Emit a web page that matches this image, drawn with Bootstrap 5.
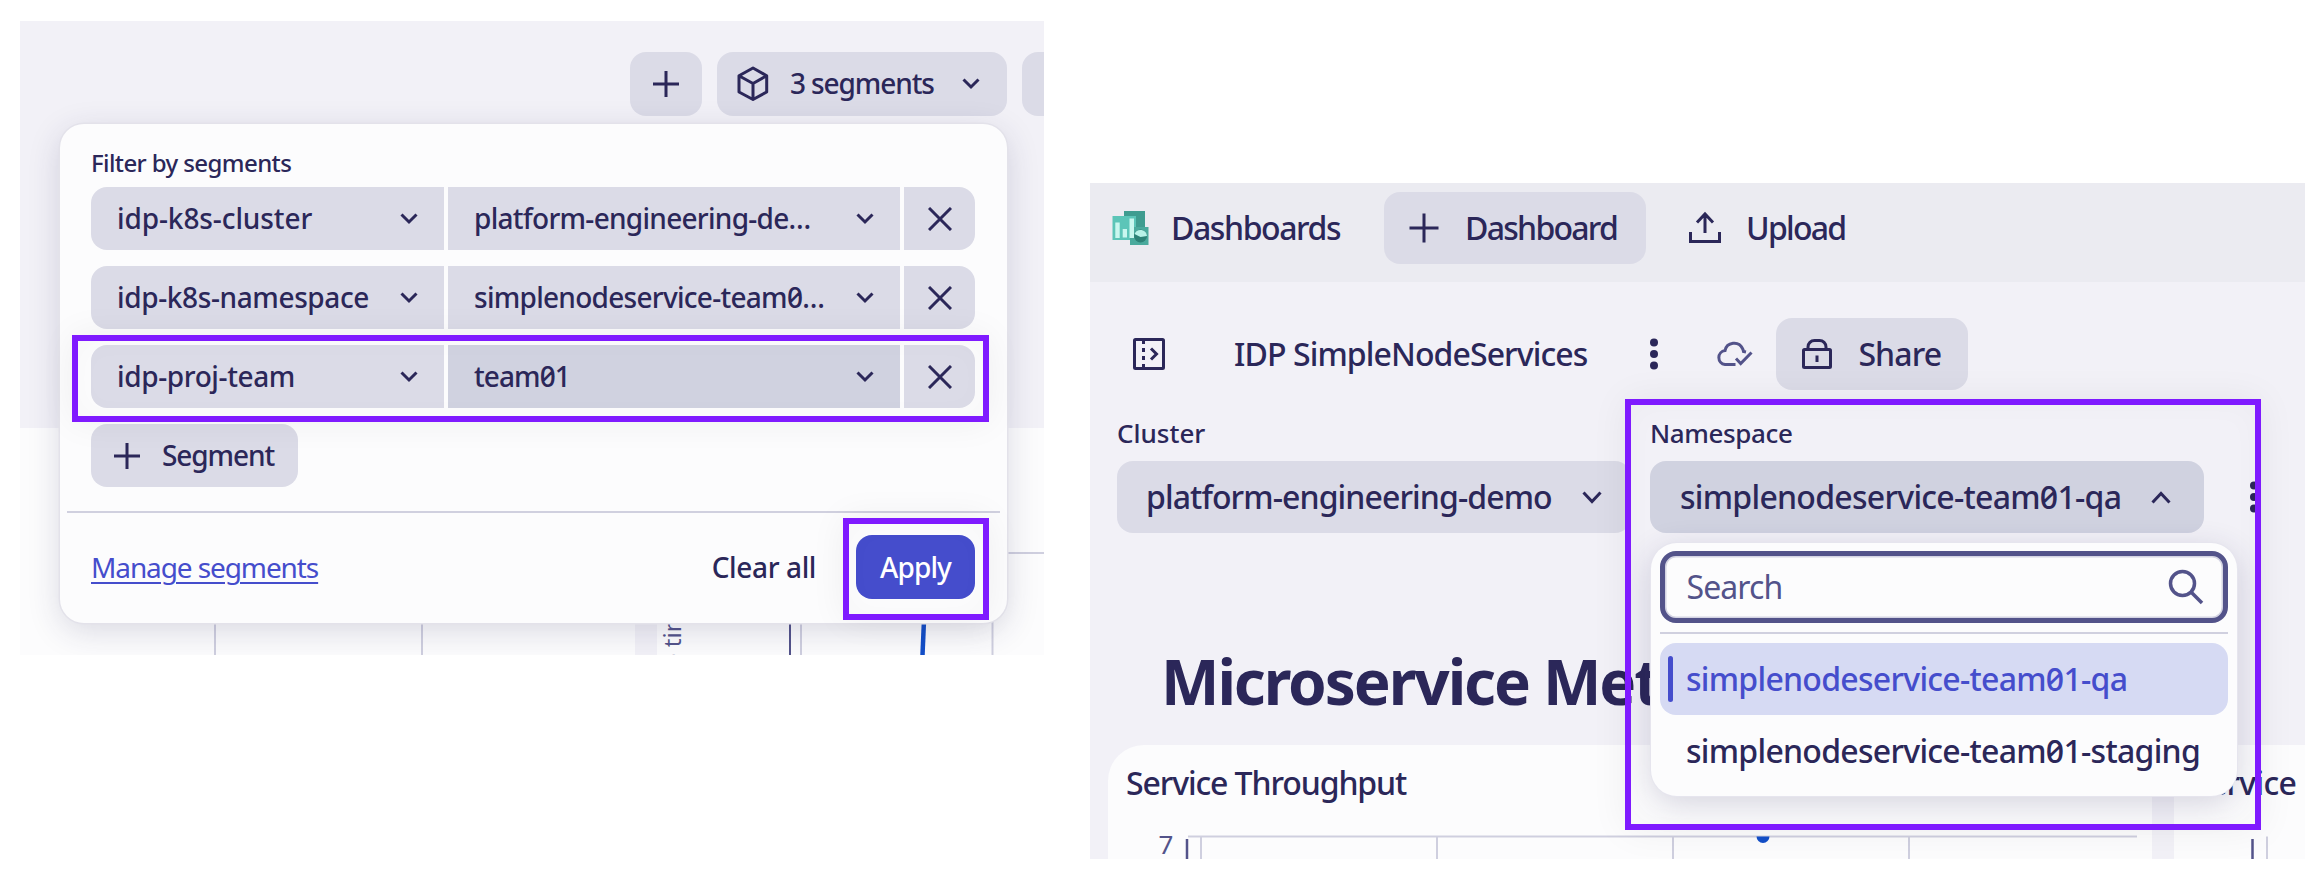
<!DOCTYPE html>
<html lang="en">
<head>
<meta charset="utf-8">
<title>Segments and dashboard variables</title>
<link rel="stylesheet" href="https://cdn.jsdelivr.net/npm/bootstrap@5.3.0/dist/css/bootstrap.min.css">
<style>
:root{--ink:#2b2759;--soft:#dbdbe7;--soft-on:#d0d2e0;--page:#f2f1f7;--surface:#fcfcfd;--line:#d0d0df;--brand:#454dcc;--mark:#7f1aff}
body{font-family:"Noto Sans",sans-serif;font-weight:500;color:var(--ink);background:#fff;height:892px;overflow:hidden;font-feature-settings:"zero" 1;line-height:1;white-space:nowrap}
svg{flex:none;display:block;fill:none;stroke:currentColor}
svg.solid{fill:currentColor;stroke:none}
.shot{background:var(--page);overflow:hidden}
.shot-a{width:1024px;height:634px;margin:21px 0 0 20px;font-size:28px}
.shot-b{width:1215px;height:676px;margin:183px 0 0 46px;font-size:32px}
.pill{background:var(--soft);border:0;border-radius:16px;color:inherit;font-weight:500;padding:0;display:flex;align-items:center;flex:none}
.pill-on{background:var(--soft-on)}
/* tracking steps */
.ls-0{letter-spacing:-.1px}.ls-1{letter-spacing:-.38px}.ls-2{letter-spacing:-.6px}.ls-3{letter-spacing:-.72px}.ls-4{letter-spacing:-.9px}
.ls-5{letter-spacing:-1.1px}.ls-6{letter-spacing:-1.42px}.ls-7{letter-spacing:-1.75px}
/* segments toolbar */
.bar-a{height:64px;margin-top:31px;padding-left:610px;gap:15px}
.bar-a .pill{height:64px}
.w-plus{width:72px}.w-segs{width:290px}.w-cut{width:60px}
.cube{margin:0 17px 0 16px}
.chev-segs{margin-left:28px}
/* segment popup */
.popup{left:40px;top:103px;width:946.5px;height:499px;border-radius:24px;background:var(--surface);box-shadow:0 0 0 1.5px #e3e2ea,0 8px 32px rgba(43,39,89,.17)}
.popup-in{padding:0 31px}
.fl-label{font-size:24px;line-height:32px;padding-top:23px;height:63px}
.seg-row{height:63px;gap:4px;margin-bottom:16px}
.seg-row .pill{height:63px;border-radius:0;padding:0 26px}
.seg-row .k{width:353px;border-radius:16px 0 0 16px}
.seg-row .v{width:452px}
.seg-row .x{width:71px;border-radius:0 16px 16px 0;padding:0;justify-content:center}
.seg-row span,.add-seg span,.foot-a>*,.bar-a span{position:relative;top:-1px}
.add-seg{width:207px;height:63px;padding-left:22px;gap:21px}
.rule-a{height:2px;background:var(--line);margin:24px 7px 0}
.foot-a{height:64px;margin-top:23px;padding:0 31.5px 0 31px}
.link-a{color:var(--brand);font-weight:400;text-decoration-thickness:2px;text-underline-offset:4px}
.clear{margin:0 40px 0 auto}
.apply{width:119px;height:64px;background:var(--brand);color:#fff;justify-content:center}
/* charts behind the popup */
.under-a{left:0;top:407px;width:1024px;height:227px;background:var(--surface)}
/* highlight frames */
.hl{border:6px solid var(--mark);box-shadow:0 0 36px rgba(0,0,0,.06),inset 0 0 30px rgba(0,0,0,.025);pointer-events:none}
.hl-row{left:52px;top:314px;width:917px;height:87px}
.hl-apply{left:823px;top:497px;width:146px;height:102px}
.hl-menu{left:535px;top:216px;width:636px;height:431px}
/* dashboards app */
.top-b{height:99px;background:#ebebf1;padding:9px 0 18px 22px}
.top-b .pill{width:262px;height:72px;margin-left:44px;padding-left:25px;gap:26px}
.app-name{margin-left:21px}
.up-icon{margin:0 24px 0 42px}
.title-b{height:72px;margin-top:36px}
.title-b .pill{width:192px;height:72px;padding-left:26px;gap:26px;margin-left:22px}
.panel-icon{margin:0 69px 0 43px}
.more{margin-left:62px}
.cloud{margin-left:57px;color:#53538a}
.vars{padding:25px 0 0 27px}
.var-1{width:533px}
.var-label{font-size:26px;line-height:36px;height:36px;margin-bottom:10px}
.sel-b{height:72px;padding-left:30px;gap:30px}
.sel-1{width:514px;padding-left:29px}.sel-2{width:554px}
.more-2{margin:66px 0 0 45px}
.menu-b{left:560.5px;top:360px;width:586px;height:253px;border-radius:26px;background:var(--surface);padding:8px 9px;box-shadow:0 0 0 1px #e6e5ee,0 8px 32px rgba(43,39,89,.19)}
.search-b{height:72px;border:5px solid #53538a;border-radius:16px;box-shadow:inset 0 0 0 1.5px #d4d4e3;color:#53538a;font-weight:400;padding:0 19px 0 22px}
.rule-b{height:2px;background:var(--line);margin:9px 0}
.opt{height:72px;border-radius:16px;padding-left:8px}
.opt i{width:5px;height:46px;border-radius:3px;margin-right:13.5px}
.opt-on{background:#d6daf3;color:var(--brand)}
.opt-on i{background:var(--brand)}
.head-b{font-size:62px;font-weight:700;line-height:72px;left:71px;top:462px;letter-spacing:-2.09px}
.tiles{left:18px;top:561.5px;width:1197px;height:115px;gap:22px}
.tile{background:var(--surface);border-radius:36px 36px 0 0;height:115px;position:relative}
.tile-1{width:1044px}
.tile-2{border-top-right-radius:0}
.tile-name{padding:16px 0 0 18px;line-height:44px}
.tile svg{left:0;top:0}
</style>
</head>
<body>
<div class="d-flex align-items-start">
  <section class="shot shot-a position-relative flex-shrink-0">
    <div class="under-a position-absolute">
      <svg width="1024" height="227" viewBox="20 428 1024 227">
        <path d="M635 428H657V655H635Z" fill="#f2f1f7" stroke="none"/>
        <path d="M215 553V655M422 553V655M801 553V655M992.500 553V655M790 553H1044" stroke="#cfcfdf" stroke-width="2"/>
        <path d="M790 553V655" stroke="#53538a" stroke-width="2"/>
        <path d="M924 620L922.500 655" stroke="#134fc9" stroke-width="4.500"/>
        <text transform="translate(681 667) rotate(-90)" font-size="24" font-weight="400" fill="#53538a" stroke="none">e time</text>
      </svg>
    </div>
    <div class="bar-a d-flex">
      <button class="pill w-plus justify-content-center"><svg width="28" height="28" stroke-width="3"><path d="M14 1V27M1 14H27"/></svg></button>
      <button class="pill w-segs"><svg class="cube" width="40" height="40" stroke-width="3" stroke-linejoin="round"><path d="M20 4L33.700 11.700V28L20 35.500L6 28V11.700ZM6 11.700L20 19.500L33.700 11.700M20 19.500V35.500"/></svg><span class="ls-5">3 segments</span><svg class="chev-segs" width="18" height="12" stroke-width="3"><path d="M1.500 1.500L9 9L16.500 1.500"/></svg></button>
      <div class="pill w-cut"></div>
    </div>
    <div class="popup position-absolute">
      <div class="popup-in">
        <div class="fl-label"><span class="ls-2">Filter by segments</span></div>
        <div class="seg-row d-flex"><div class="pill k justify-content-between"><span class="ls-0">idp-k8s-cluster</span><svg width="18" height="12" stroke-width="3"><path d="M1.500 1.500L9 9L16.500 1.500"/></svg></div><div class="pill v justify-content-between"><span class="ls-3">platform-engineering-de…</span><svg width="18" height="12" stroke-width="3"><path d="M1.500 1.500L9 9L16.500 1.500"/></svg></div><div class="pill x"><svg width="24" height="24" stroke-width="3"><path d="M1 1L23 23M23 1L1 23"/></svg></div></div>
        <div class="seg-row d-flex"><div class="pill k justify-content-between"><span class="ls-1">idp-k8s-namespace</span><svg width="18" height="12" stroke-width="3"><path d="M1.500 1.500L9 9L16.500 1.500"/></svg></div><div class="pill v justify-content-between"><span class="ls-3">simplenodeservice-team0…</span><svg width="18" height="12" stroke-width="3"><path d="M1.500 1.500L9 9L16.500 1.500"/></svg></div><div class="pill x"><svg width="24" height="24" stroke-width="3"><path d="M1 1L23 23M23 1L1 23"/></svg></div></div>
        <div class="seg-row d-flex"><div class="pill k justify-content-between"><span class="ls-1">idp-proj-team</span><svg width="18" height="12" stroke-width="3"><path d="M1.500 1.500L9 9L16.500 1.500"/></svg></div><div class="pill pill-on v justify-content-between"><span class="ls-4">team01</span><svg width="18" height="12" stroke-width="3"><path d="M1.500 1.500L9 9L16.500 1.500"/></svg></div><div class="pill x"><svg width="24" height="24" stroke-width="3"><path d="M1 1L23 23M23 1L1 23"/></svg></div></div>
        <button class="pill add-seg"><svg width="28" height="28" stroke-width="3"><path d="M14 1V27M1 14H27"/></svg><span class="ls-5">Segment</span></button>
      </div>
      <div class="rule-a"></div>
      <div class="foot-a d-flex align-items-center"><a href="#" class="link-a ls-5">Manage segments</a><span class="clear ls-1">Clear all</span><button class="pill apply ls-4">Apply</button></div>
    </div>
    <div class="hl hl-row position-absolute"></div>
    <div class="hl hl-apply position-absolute"></div>
  </section>

  <section class="shot shot-b position-relative flex-shrink-0">
    <div class="tiles position-absolute d-flex">
      <div class="tile tile-1">
        <div class="tile-name ls-5">Service Throughput</div>
        <svg class="position-absolute" width="1044" height="115" viewBox="1108 744 1044 115"><path d="M1188 835.500H2137M1201 835.500V859M1437 835.500V859M1673 835.500V859M1909 835.500V859" stroke="#cfcfdf" stroke-width="2"/><path d="M1187 838V859" stroke="#53538a" stroke-width="2.500"/><path d="M1756.500 835.500A6.500 6.500 0 0 0 1769.500 835.500Z" fill="#134fc9" stroke="none"/><text x="1158.500" y="853" font-size="26" font-weight="400" fill="#53538a" stroke="none">7</text></svg>
      </div>
      <div class="tile tile-2 flex-grow-1">
        <div class="tile-name ls-3">Service</div>
        <svg class="position-absolute" width="130" height="115" viewBox="2175 744 130 115"><path d="M2268 835.500V859" stroke="#cfcfdf" stroke-width="2"/><path d="M2253.500 838V859" stroke="#53538a" stroke-width="2.500"/></svg>
      </div>
    </div>
    <header class="top-b d-flex align-items-center">
      <svg class="solid" width="38" height="36"><path d="M12 1H33V20H12Z" fill="#3f9c90"/><path d="M0.500 6H24V30H0.500Z" fill="#5cc5b8"/><path d="M18 17H36.500V35H18Z" fill="#4aaa9d"/><path d="M3.300 12.500H7.700V28H3.300ZM10.700 19H15V27.500H10.700ZM17.500 8.500H22V28H17.500Z" fill="#c9f7ef"/><circle cx="28.500" cy="26" r="6.500" fill="#2d8277"/><path d="M22.500 24A6.500 6.500 0 0 1 35 26L28.500 27Z" fill="#b8f2e8"/></svg>
      <span class="app-name ls-6">Dashboards</span>
      <button class="pill"><svg width="30" height="30" stroke-width="3"><path d="M15 .5V29.500M.5 15H29.500"/></svg><span class="ls-7">Dashboard</span></button>
      <svg class="up-icon" width="34" height="34" stroke-width="3"><path d="M2.500 21V30.500H31.500V21M17 22V4M9 11.500L17 3L25 11.500"/></svg>
      <span class="ls-7">Upload</span>
    </header>
    <div class="title-b d-flex align-items-center">
      <svg class="panel-icon" width="32" height="32" stroke-width="3"><rect x="1.500" y="1.500" width="29" height="29" rx="1"/><path d="M10.500 2V30" stroke-dasharray="4 4"/><path d="M18 10.500L23.500 16L18 21.500"/></svg>
      <span class="ls-4">IDP SimpleNodeServices</span>
      <svg class="solid more" width="10" height="32"><circle cx="5" cy="4.500" r="4"/><circle cx="5" cy="16" r="4"/><circle cx="5" cy="27.500" r="4"/></svg>
      <svg class="cloud" width="38" height="26" stroke-width="3"><path d="M19.500 23.500H9A7 7 0 0 1 9 9.600A9.300 9.300 0 0 1 26.500 7.500Q27.300 9 27.500 10.500L30 11M20 17.500L24.700 22.500L35.500 11.500"/></svg>
      <button class="pill"><svg width="30" height="30" stroke-width="3"><rect x="1.500" y="10.500" width="27" height="18" rx="1"/><path d="M6 10V8A6.500 6.500 0 0 1 12.500 1.500H17.500A6.500 6.500 0 0 1 24 8V10M15 16.500V23"/></svg><span class="ls-4">Share</span></button>
    </div>
    <div class="vars d-flex">
      <div class="var-1"><div class="var-label">Cluster</div>
        <div class="pill sel-b sel-1"><span class="ls-4">platform-engineering-demo</span><svg width="20" height="13" stroke-width="3"><path d="M1.500 1.500L10 10.500L18.500 1.500"/></svg></div></div>
      <div><div class="var-label ls-1">Namespace</div>
        <div class="pill pill-on sel-b sel-2"><span class="ls-3">simplenodeservice-team01-qa</span><svg width="20" height="13" stroke-width="3"><path d="M1.500 11.500L10 2.500L18.500 11.500"/></svg></div></div>
      <svg class="solid more-2" width="10" height="32"><circle cx="5" cy="4.500" r="4"/><circle cx="5" cy="16" r="4"/><circle cx="5" cy="27.500" r="4"/></svg>
    </div>
    <h1 class="head-b position-absolute m-0">Microservice Metrics</h1>
    <div class="menu-b position-absolute">
      <div class="search-b d-flex align-items-center justify-content-between"><span class="ls-4">Search</span><svg width="36" height="36" stroke-width="3.500"><circle cx="14.500" cy="14.500" r="12"/><path d="M23 23L34 34"/></svg></div>
      <div class="rule-b"></div>
      <div class="opt opt-on d-flex align-items-center"><i></i><span class="ls-3">simplenodeservice-team01-qa</span></div>
      <div class="opt d-flex align-items-center"><i></i><span class="ls-3">simplenodeservice-team01-staging</span></div>
    </div>
    <div class="hl hl-menu position-absolute"></div>
  </section>
</div>
<script src="https://cdn.jsdelivr.net/npm/bootstrap@5.3.0/dist/js/bootstrap.bundle.min.js"></script>
</body>
</html>
